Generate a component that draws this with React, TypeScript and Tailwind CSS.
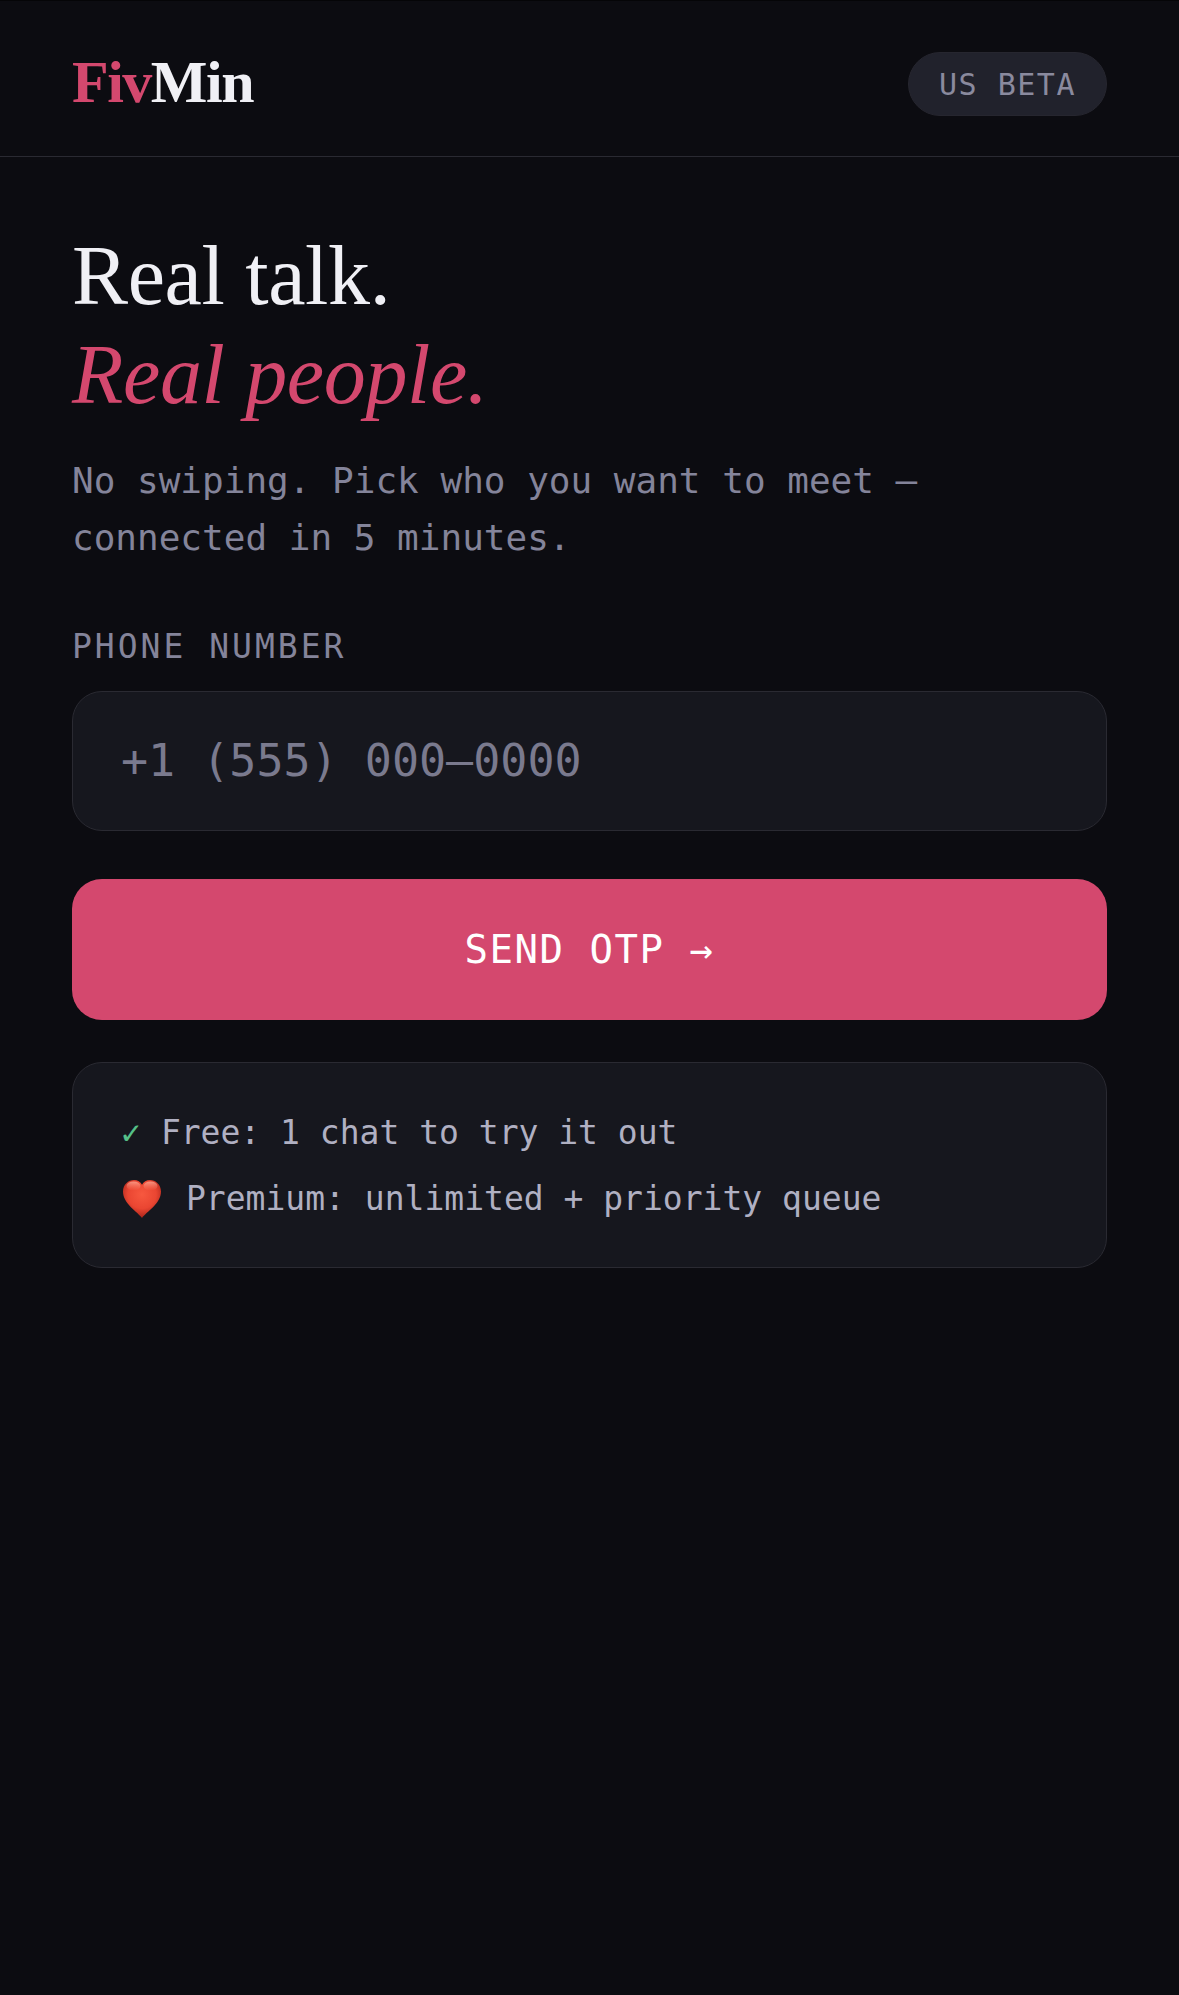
import React from 'react';

const serif = "font-['Liberation_Serif',serif]";

const Heart = () => (
  <svg viewBox="0 0 40 40" className="ml-[1px] h-[40px] w-[40px] shrink-0">
    <defs>
      <radialGradient id="heart" cx="0.5" cy="0.38" r="0.62">
        <stop offset="0" stopColor="#f7583f" />
        <stop offset="0.6" stopColor="#ea4632" />
        <stop offset="1" stopColor="#a92319" />
      </radialGradient>
      <linearGradient id="shine" x1="0" y1="0" x2="0" y2="1">
        <stop offset="0" stopColor="#ffb09c" stopOpacity="0.75" />
        <stop offset="1" stopColor="#ff8f7a" stopOpacity="0" />
      </linearGradient>
    </defs>
    <path
      d="M20 39C16 33 1 25 1 12.500C1 5.500 6.300 1 12 1c3.600 0 6.500 1.800 8 4.700C21.500 2.800 24.400 1 28 1c5.700 0 11 4.500 11 11.500C39 25 24 33 20 39z"
      fill="url(#heart)"
    />
    <ellipse cx="11.500" cy="7" rx="7" ry="4.500" fill="url(#shine)" />
    <ellipse cx="28.500" cy="7" rx="7" ry="4.500" fill="url(#shine)" />
  </svg>
);

const App: React.FC = () => {
  return (
    <div className="min-h-[1995px] bg-[#0c0c11] font-['DejaVu_Sans_Mono',monospace]">
      <div className="flex h-[157px] items-center justify-between border-t border-b border-t-[#050507] border-b-[#2a2a32] px-[72px] pt-[11px]">
        <div className={`${serif} pb-[4px] text-[60px] leading-none font-bold tracking-[-1.5px] text-[#f0f0f5]`}>
          <span className="text-[#d4486e]">Fiv</span>Min
        </div>
        <div className="flex h-[64px] w-[199px] items-center justify-center rounded-full border border-[#26262f] bg-[#21222c] text-[30px] tracking-[1.5px] text-[#8a8a9e]">
          US BETA
        </div>
      </div>
      <div className="flex flex-col px-[72px] pt-[69px]">
        <h1 className={`${serif} text-[84px] leading-[99px] font-normal tracking-[-0.35px] text-[#f0f0f5]`}>
          Real talk.
          <br />
          <em className="text-[#d4486e]">Real people.</em>
        </h1>
        <p className="mt-[28px] text-[36px] leading-[57px] text-[#84849a]">
          No swiping. Pick who you want to meet —<br />
          connected in 5 minutes.
        </p>
        <div className="mt-[56px] text-[33px] leading-[50px] tracking-[3px] text-[#84849a]">PHONE NUMBER</div>
        <div className="mt-[19px] flex h-[140px] items-center rounded-[30px] border border-[#2a2a32] bg-[#16171e] px-[48px] text-[45px] text-[#7a7a8e]">
          +1 (555) 000–0000
        </div>
        <div className="mt-[48px] flex h-[141px] items-center justify-center rounded-[30px] bg-[#d4486e] pt-[2px] text-[39px] tracking-[1.5px] text-white">
          SEND OTP →
        </div>
        <div className="mt-[42px] flex h-[206px] flex-col justify-center gap-[16px] rounded-[30px] border border-[#2a2a32] bg-[#16171e] px-[48px] pt-[2px] text-[33px] leading-[50px] text-[#b0b0c2]">
          <div className="flex items-center">
            <span className="mr-[20px] text-[#55c088]">✓</span>Free: 1 chat to try it out
          </div>
          <div className="flex items-center">
            <Heart />
            <span className="ml-[24px]">Premium: unlimited + priority queue</span>
          </div>
        </div>
      </div>
    </div>
  );
};

export default App;
